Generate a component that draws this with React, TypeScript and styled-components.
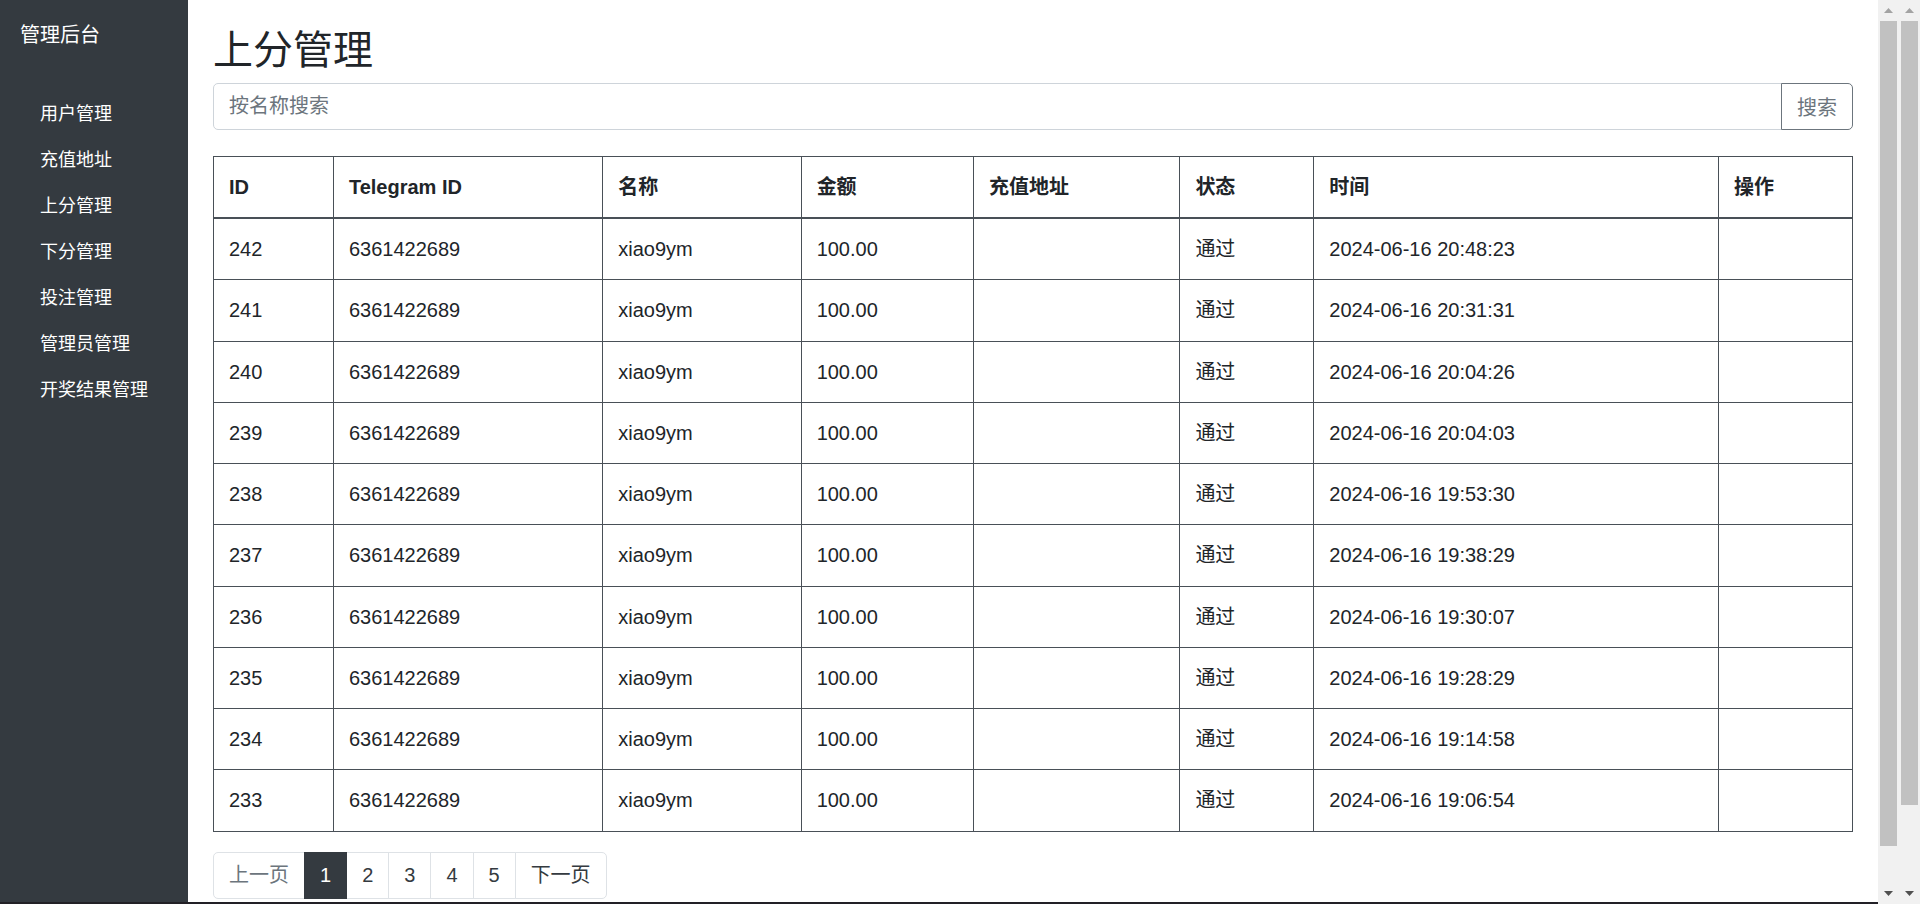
import React, { useState } from 'react';
import styled, { createGlobalStyle } from 'styled-components';

const GlobalStyle = createGlobalStyle`
  html, body {
    margin: 0;
    padding: 0;
    overflow: hidden;
  }
  body {
    font-family: "Liberation Sans", Arial, "Noto Sans CJK SC", sans-serif;
    color: #212529;
    background: #fff;
  }
  *, *::before, *::after {
    box-sizing: border-box;
  }
`;

const Shell = styled.div`
  display: flex;
  height: 100vh;
`;

const Workspace = styled.div`
  flex: 1;
  min-width: 0;
  display: flex;
  flex-direction: column;
`;

const Body = styled.div`
  flex: 1;
  min-height: 0;
  display: flex;
`;

const BottomEdge = styled.div`
  height: 2px;
  flex-shrink: 0;
  background: #222026;
`;

const Sidebar = styled.aside`
  width: 188px;
  flex-shrink: 0;
  background: #343a40;
  color: #fff;
  padding: 20px;
`;

const Brand = styled.div`
  font-size: 20px;
  line-height: 30px;
  margin-bottom: 41px;
`;

const NavList = styled.ul`
  list-style: none;
  margin: 0;
  padding: 0;
`;

const NavLink = styled.a`
  display: block;
  padding: 9.5px 20px;
  font-size: 18px;
  line-height: 27px;
  color: #fff;
  text-decoration: none;
  white-space: nowrap;
  cursor: pointer;
`;

const Main = styled.main`
  flex: 1;
  min-width: 0;
  overflow: hidden;
  padding: 26px 25px 25px;
`;

const Title = styled.h1`
  margin: 0 0 9px;
  font-size: 40px;
  line-height: 48px;
  font-weight: 400;
  color: #212529;
`;

const SearchBar = styled.form`
  display: flex;
  margin-bottom: 26px;
`;

const SearchInput = styled.input`
  flex: 1;
  height: 47px;
  padding: 7.5px 15px;
  font-family: inherit;
  font-size: 20px;
  color: #495057;
  border: 1px solid #ced4da;
  border-radius: 5px 0 0 5px;
  outline: none;
  &::placeholder {
    color: #6c757d;
  }
`;

const SearchButton = styled.button`
  margin-left: -1px;
  padding: 0 15px;
  height: 47px;
  font-family: inherit;
  font-size: 20px;
  color: #6c757d;
  background: transparent;
  border: 1px solid #6c757d;
  border-radius: 0 5px 5px 0;
  cursor: pointer;
`;

const Table = styled.table`
  width: 100%;
  table-layout: fixed;
  border-collapse: collapse;
  margin-bottom: 20px;
  font-size: 20px;
  line-height: 30px;

  th,
  td {
    padding: 15px;
    border: 1px solid #495057;
    text-align: left;
    vertical-align: top;
    white-space: nowrap;
  }

  td {
    line-height: 30.25px;
  }

  th {
    font-weight: 700;
  }

  thead th {
    border-bottom-width: 2px;
  }
`;

const Pager = styled.ul`
  display: flex;
  list-style: none;
  margin: 0 0 20px;
  padding: 0;
`;

const PageLink = styled.li<{ $active?: boolean; $disabled?: boolean }>`
  padding: 10px 15px;
  margin-left: -1px;
  font-size: 20px;
  line-height: 25px;
  border: 1px solid ${(p) => (p.$active ? '#343a40' : '#dee2e6')};
  background: ${(p) => (p.$active ? '#343a40' : '#fff')};
  color: ${(p) => (p.$active ? '#fff' : p.$disabled ? '#6c757d' : '#343a40')};
  cursor: ${(p) => (p.$disabled ? 'default' : 'pointer')};
  position: relative;
  z-index: ${(p) => (p.$active ? 1 : 0)};

  &:first-child {
    margin-left: 0;
    border-radius: 5px 0 0 5px;
  }
  &:last-child {
    border-radius: 0 5px 5px 0;
  }
`;

/* two stacked gray scroll rails on the right edge */
const Rails = styled.div`
  display: flex;
  flex-shrink: 0;
  background: #f1f1f1;
`;

const Rail = styled.div`
  width: 21px;
  display: flex;
  flex-direction: column;
`;

const RailButton = styled.div`
  height: 21px;
  flex-shrink: 0;
  display: flex;
  align-items: center;
  justify-content: center;
`;

const Trough = styled.div`
  flex: 1;
  padding: 0 2px;
`;

const Thumb = styled.div<{ $length: number }>`
  height: ${(p) => p.$length}px;
  background: #c1c1c1;
`;

const Arrow = ({ up, color }: { up?: boolean; color: string }) => (
  <svg width="9" height="5" viewBox="0 0 9 5">
    <path d={up ? 'M0 5L4.5 0L9 5Z' : 'M0 0L4.5 5L9 0Z'} fill={color} />
  </svg>
);

const ScrollRail = ({ thumb }: { thumb: number }) => (
  <Rail>
    <RailButton>
      <Arrow up color="#a3a3a3" />
    </RailButton>
    <Trough>
      <Thumb $length={thumb} />
    </Trough>
    <RailButton>
      <Arrow color="#505050" />
    </RailButton>
  </Rail>
);

const menu = ['用户管理', '充值地址', '上分管理', '下分管理', '投注管理', '管理员管理', '开奖结果管理'];

const columns = [
  { label: 'ID', width: 120 },
  { label: 'Telegram ID', width: 269.5 },
  { label: '名称', width: 198.5 },
  { label: '金额', width: 172.5 },
  { label: '充值地址', width: 206.5 },
  { label: '状态', width: 134 },
  { label: '时间', width: 405 },
  { label: '操作', width: 134 },
];

const deposits = [
  { id: 242, time: '2024-06-16 20:48:23' },
  { id: 241, time: '2024-06-16 20:31:31' },
  { id: 240, time: '2024-06-16 20:04:26' },
  { id: 239, time: '2024-06-16 20:04:03' },
  { id: 238, time: '2024-06-16 19:53:30' },
  { id: 237, time: '2024-06-16 19:38:29' },
  { id: 236, time: '2024-06-16 19:30:07' },
  { id: 235, time: '2024-06-16 19:28:29' },
  { id: 234, time: '2024-06-16 19:14:58' },
  { id: 233, time: '2024-06-16 19:06:54' },
].map((r) => ({
  ...r,
  telegramId: '6361422689',
  name: 'xiao9ym',
  amount: '100.00',
  address: '',
  status: '通过',
}));

const totalWidth = columns.reduce((sum, c) => sum + c.width, 0);

export default function App() {
  const [page, setPage] = useState(1);
  const [keyword, setKeyword] = useState('');

  return (
    <>
      <GlobalStyle />
      <Shell>
        <Workspace>
          <Body>
            <Sidebar>
              <Brand>管理后台</Brand>
              <NavList>
                {menu.map((item) => (
                  <li key={item}>
                    <NavLink>{item}</NavLink>
                  </li>
                ))}
              </NavList>
            </Sidebar>

            <Main>
              <Title>上分管理</Title>
              <SearchBar onSubmit={(e) => e.preventDefault()}>
                <SearchInput
                  placeholder="按名称搜索"
                  value={keyword}
                  onChange={(e) => setKeyword(e.target.value)}
                />
                <SearchButton type="submit">搜索</SearchButton>
              </SearchBar>

              <Table>
                <colgroup>
                  {columns.map((c) => (
                    <col key={c.label} style={{ width: `${(c.width / totalWidth) * 100}%` }} />
                  ))}
                </colgroup>
                <thead>
                  <tr>
                    {columns.map((c) => (
                      <th key={c.label}>{c.label}</th>
                    ))}
                  </tr>
                </thead>
                <tbody>
                  {deposits.map((r) => (
                    <tr key={r.id}>
                      <td>{r.id}</td>
                      <td>{r.telegramId}</td>
                      <td>{r.name}</td>
                      <td>{r.amount}</td>
                      <td>{r.address}</td>
                      <td>{r.status}</td>
                      <td>{r.time}</td>
                      <td></td>
                    </tr>
                  ))}
                </tbody>
              </Table>

              <Pager>
                <PageLink $disabled={page === 1} onClick={() => page > 1 && setPage(page - 1)}>
                  上一页
                </PageLink>
                {[1, 2, 3, 4, 5].map((n) => (
                  <PageLink key={n} $active={n === page} onClick={() => setPage(n)}>
                    {n}
                  </PageLink>
                ))}
                <PageLink onClick={() => page < 5 && setPage(page + 1)}>下一页</PageLink>
              </Pager>
            </Main>
          </Body>
          <BottomEdge />
        </Workspace>
        <Rails>
          <ScrollRail thumb={825} />
          <ScrollRail thumb={784} />
        </Rails>
      </Shell>
    </>
  );
}
